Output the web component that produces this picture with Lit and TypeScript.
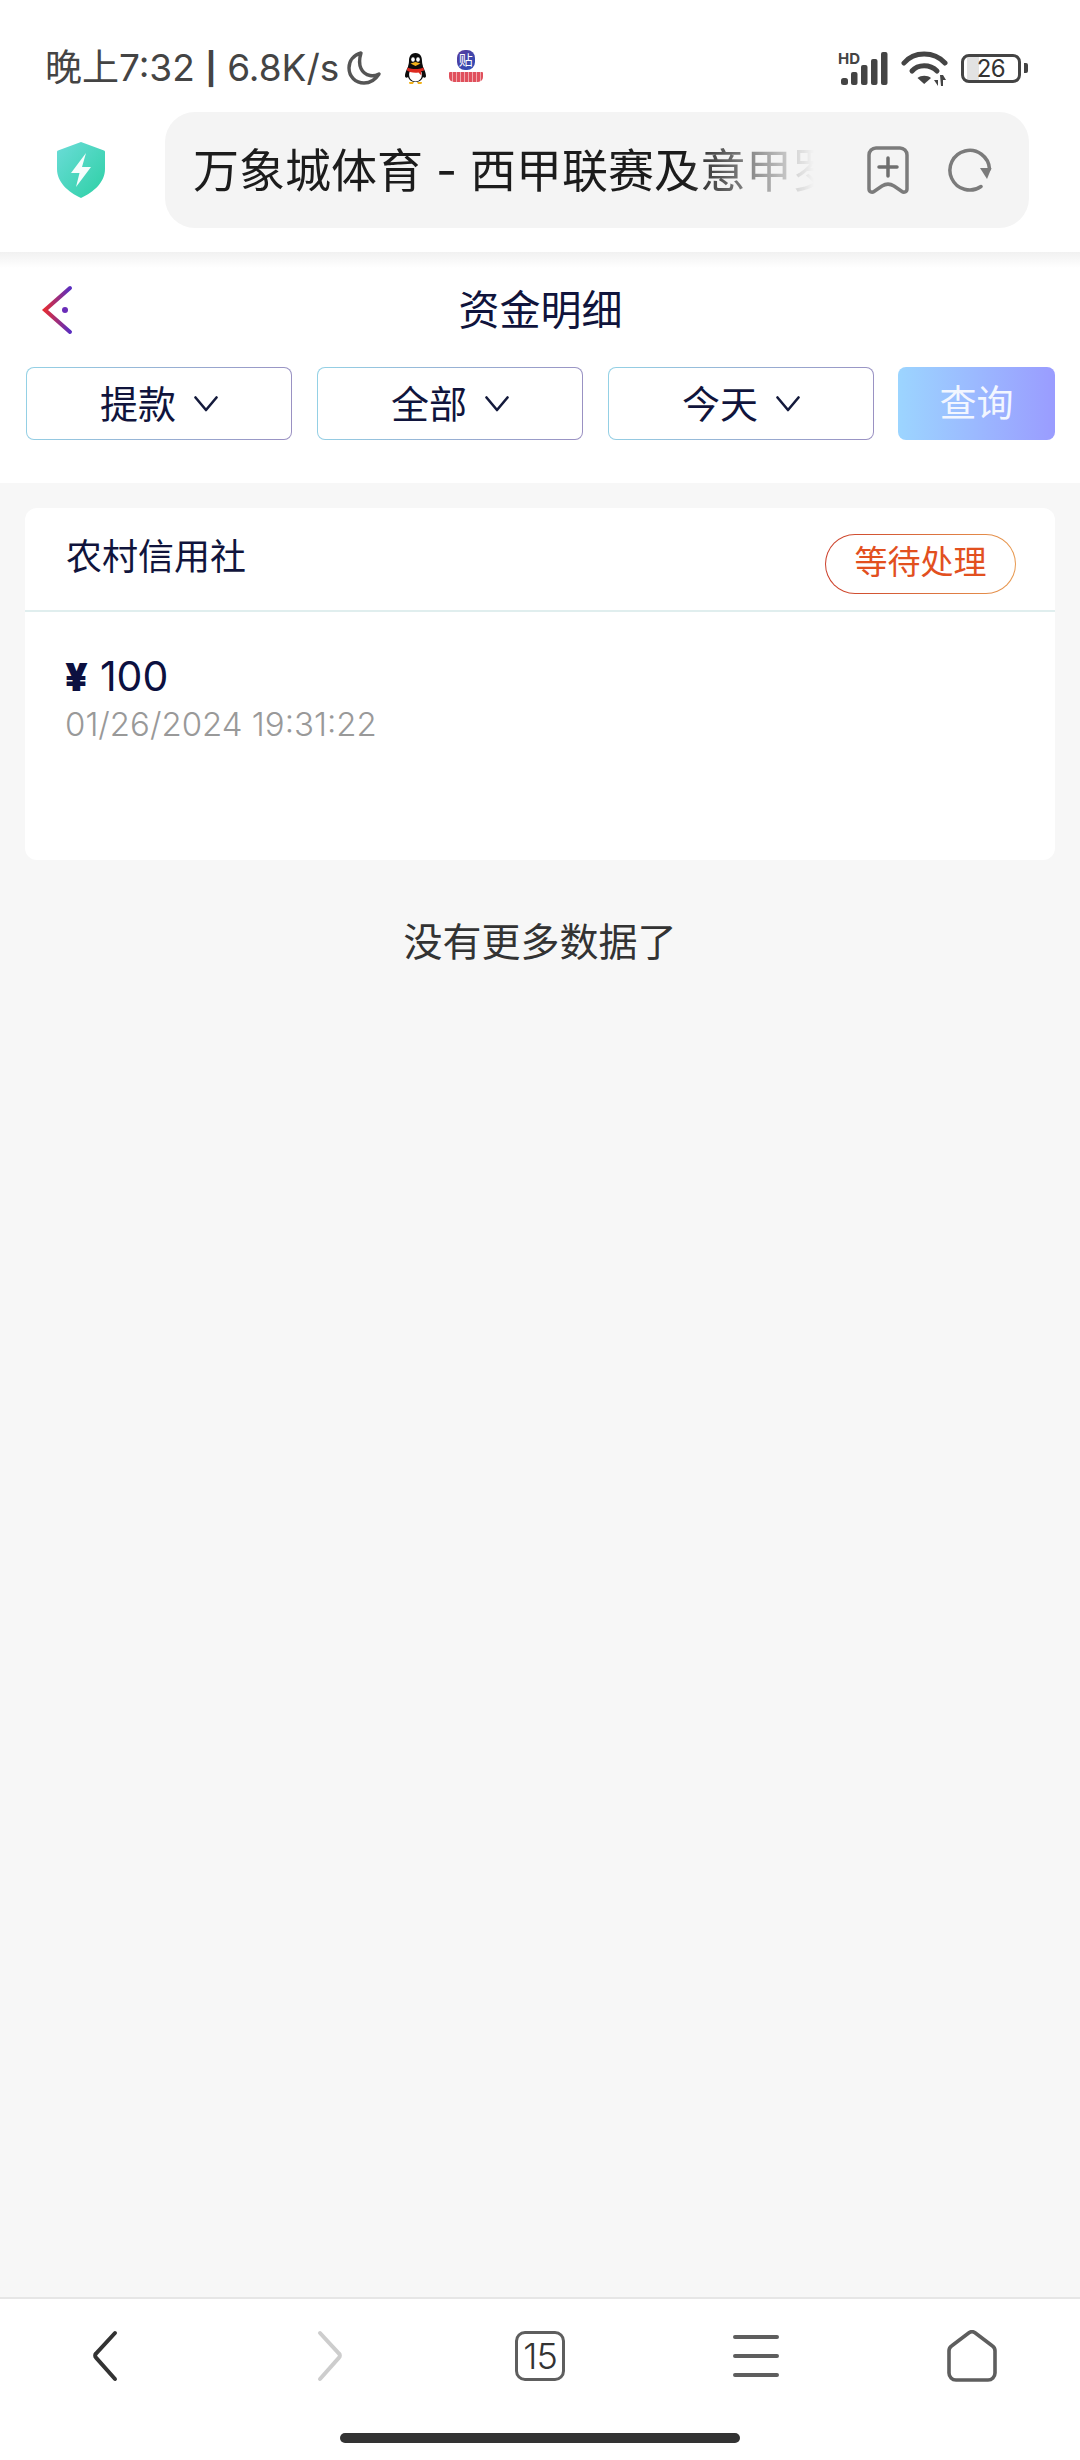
import { LitElement, html, css, svg } from 'lit';
import { customElement } from 'lit/decorators.js';

const FILTERS = ['提款', '全部', '今天'];

const chevron = html`<svg class="chev" width="24" height="16" viewBox="0 0 24 16">
  <path d="M1.5 1.5 12 14 22.5 1.5" fill="none" stroke="#141a3c" stroke-width="2.6" stroke-linecap="round" stroke-linejoin="round" />
</svg>`;

const penguin = svg`
  <path d="M12.5 1C7.5 1 6 5 6 9c0 3-1 4-1 6 0 0-3 5-3 9 0 2 2 2 3 1 1 3 4 5 7.500 5s6.500-2 7.500-5c1 1 3 1 3-1 0-4-3-9-3-9 0-2-1-3-1-6 0-4-1.500-8-6.500-8Z" fill="#0c0c0c" />
  <path d="M6.500 20c-1.500 5 1.500 9.500 6 9.500s7.500-4.500 6-9.500Z" fill="#fff" />
  <ellipse cx="10" cy="7.500" rx="1.800" ry="2.300" fill="#fff" />
  <ellipse cx="15" cy="7.500" rx="1.800" ry="2.300" fill="#fff" />
  <path d="M7.500 11.500 12.500 10l5 1.500-5 2.500Z" fill="#f2b21a" />
  <path d="M4.500 15.500c5 2 11 2 16 0l.5 3-3 1 .5 4-3-3c-3 .5-6 .2-8.500-.5l-3-1.500Z" fill="#dd2a20" />
  <path d="M6 30h5l-1 2H6.500ZM14 30h5l-.5 2H15Z" fill="#f2b21a" />
`;

@customElement('app-root')
export class AppRoot extends LitElement {
  static styles = css`
    :host {
      display: flex;
      flex-direction: column;
      width: 1080px;
      height: 2460px;
      background: #f7f7f7;
      font-family: Inter, Roboto, "Noto Sans CJK SC", sans-serif;
    }
    .browser {
      background: #fff;
      height: 252px;
      flex: none;
    }
    .status {
      display: flex;
      align-items: center;
      height: 112px;
      padding: 24px 52px 0 45px;
      box-sizing: border-box;
      color: #444;
    }
    .clock {
      font-size: 37px;
      line-height: 44px;
      white-space: nowrap;
    }
    .sep {
      font-size: 31px;
      font-weight: 700;
      vertical-align: 1px;
    }
    .moon { margin-left: 7px; }
    .qq { margin-left: 21px; }
    .tie-app {
      margin-left: 20px;
      width: 35px;
      height: 36px;
      display: flex;
      flex-direction: column;
      align-items: center;
    }
    .tie {
      width: 18px;
      height: 20px;
      border-radius: 8px;
      background: linear-gradient(135deg, #5a3a9c, #2a4fb8);
      color: #fff;
      font-size: 14px;
      line-height: 20px;
      text-align: center;
    }
    .ribbon {
      width: 34px;
      height: 10px;
      margin-top: 2px;
      background: repeating-linear-gradient(90deg, #e0505c 0 3px, #f0a8ac 3px 4px);
      border-radius: 1px 1px 5px 5px;
    }
    .status-right {
      margin-left: auto;
      display: flex;
      align-items: center;
      gap: 13px;
    }
    .battery {
      display: flex;
      align-items: center;
      gap: 3px;
    }
    .battery-body {
      width: 60px;
      height: 29px;
      box-sizing: border-box;
      border: 3px solid #444;
      border-radius: 8px;
      background: linear-gradient(90deg, #e2e2e2 12px, transparent 12px) 3px 0 / 100% 100% no-repeat;
      font-size: 24px;
      line-height: 23px;
      text-align: center;
      color: #333;
      letter-spacing: -0.5px;
    }
    .battery-nub {
      width: 4px;
      height: 10px;
      background: #444;
      border-radius: 0 2px 2px 0;
    }
    .address-row {
      display: flex;
      align-items: center;
      height: 116px;
      padding: 0 51px 0 57px;
    }
    .shield { flex: none; margin-right: 60px; }
    .pill {
      flex: 1;
      height: 116px;
      background: #f4f4f4;
      border-radius: 30px;
      display: flex;
      align-items: center;
      padding: 0 37px 0 28px;
    }
    .page-title-url {
      width: 640px;
      padding-bottom: 6px;
      font-size: 46px;
      color: #1c1c1c;
      white-space: nowrap;
      -webkit-mask-image: linear-gradient(90deg, #000 77%, transparent 97%);
      mask-image: linear-gradient(90deg, #000 77%, transparent 97%);
    }
    .pill-icons {
      margin-left: auto;
      display: flex;
      align-items: center;
      gap: 39px;
    }
    .head {
      flex: none;
      background: linear-gradient(#f1f1f1, #fff 16px);
      height: 231px;
      padding: 0 25px 0 26px;
      box-sizing: border-box;
    }
    .nav {
      position: relative;
      height: 115px;
      padding-bottom: 6px;
      box-sizing: border-box;
      display: flex;
      align-items: center;
      justify-content: center;
      font-size: 41px;
      color: #10143c;
    }
    .back {
      position: absolute;
      left: 15px;
      top: 33px;
    }
    .filters {
      display: flex;
      gap: 25px;
    }
    .filter {
      width: 266px;
      height: 73px;
      box-sizing: border-box;
      border: 1px solid transparent;
      border-radius: 8px;
      background: linear-gradient(#fff, #fff) padding-box,
        linear-gradient(100deg, #94d2e6, #9a90c2) border-box;
      display: flex;
      align-items: center;
      justify-content: center;
      gap: 18px;
      padding-bottom: 5px;
      font-size: 38px;
      color: #10143c;
    }
    .chev { margin-top: 5px; }
    .query {
      width: 157px;
      height: 73px;
      margin-left: -1px;
      padding-bottom: 5px;
      box-sizing: border-box;
      border-radius: 8px;
      background: linear-gradient(90deg, #9cd5ff, #9a9cff);
      color: #f2f6ff;
      font-size: 37px;
      display: flex;
      align-items: center;
      justify-content: center;
    }
    main {
      flex: 1;
      padding: 25px 25px 0;
    }
    .card {
      background: #fff;
      border-radius: 12px;
      height: 352px;
    }
    .card-head {
      height: 104px;
      box-sizing: border-box;
      border-bottom: 2px solid #e0eeee;
      padding: 26px 39px 0 41px;
      display: flex;
      justify-content: space-between;
      align-items: flex-start;
    }
    .bank {
      font-size: 36px;
      line-height: 46px;
      color: #10143c;
    }
    .badge {
      width: 191px;
      height: 60px;
      box-sizing: border-box;
      border: 1.5px solid transparent;
      border-radius: 30px;
      background: linear-gradient(#fff, #fff) padding-box,
        linear-gradient(90deg, #cc3f2a, #e89a50) border-box;
      font-size: 33px;
      line-height: 55px;
      text-align: center;
      color: #e2501f;
    }
    .card-body {
      padding: 39px 41px 0 40px;
    }
    .amount {
      display: flex;
      align-items: center;
      gap: 12px;
      height: 50px;
      font-size: 41px;
      color: #0c1040;
    }
    .yuan {
      font-weight: 900;
      font-size: 39px;
    }
    .date {
      margin-top: 2px;
      font-size: 33px;
      line-height: 42px;
      font-weight: 300;
      color: #999;
    }
    .no-more {
      margin-top: 54px;
      text-align: center;
      font-size: 39px;
      line-height: 56px;
      color: #333;
    }
    footer {
      flex: none;
      height: 163px;
      box-sizing: border-box;
      background: #fff;
      border-top: 2px solid #e6e6e6;
    }
    .tools {
      display: grid;
      grid-template-columns: repeat(5, 216px);
      padding-top: 30px;
      height: 54px;
    }
    .tool {
      display: flex;
      justify-content: center;
      align-items: center;
      height: 54px;
    }
    .tool-back { margin-right: 4px; }
    .tool-forward { margin-left: 10px; }
    .tabs {
      width: 50px;
      height: 50px;
      box-sizing: border-box;
      border: 3px solid #5e5e5e;
      border-radius: 10px;
      font-size: 36px;
      line-height: 44px;
      letter-spacing: -1px;
      text-align: center;
      color: #333;
      font-weight: 300;
    }
    .home-bar {
      width: 400px;
      height: 10px;
      border-radius: 5px;
      background: #333;
      margin: 50px auto 0;
    }
  `;

  render() {
    return html`
      <div class="browser">
        <div class="status">
          <span class="clock">晚上7:32 <span class="sep">|</span> 6.8K/s</span>
          <svg class="moon" width="36" height="36" viewBox="0 0 36 36">
            <path d="M15 3C8 5 3 10.500 3 18c0 8.500 6.500 15 15 15 6.500 0 11.500-3.500 15-9-3 1.500-6 2-9 1.500C16 24 11 16 15 3Z" fill="none" stroke="#555" stroke-width="3.400" stroke-linejoin="round" />
          </svg>
          <svg class="qq" width="25" height="33" viewBox="0 0 25 33">${penguin}</svg>
          <div class="tie-app">
            <div class="tie">贴</div>
            <div class="ribbon"></div>
          </div>
          <div class="status-right">
            <svg width="50" height="34" viewBox="0 0 50 34">
              <text x="0" y="13" font-family="Inter, Roboto, sans-serif" font-size="15" font-weight="700" fill="#444">HD</text>
              <g fill="#444">
                <rect x="3" y="27" width="7" height="7" rx="2.500" />
                <rect x="13" y="21" width="6.500" height="13" rx="2" />
                <rect x="23" y="14" width="6.500" height="20" rx="2" />
                <rect x="33" y="8" width="6.500" height="26" rx="2" />
                <rect x="43" y="1" width="6.500" height="33" rx="2" />
              </g>
            </svg>
            <svg width="47" height="36" viewBox="0 0 47 36">
              <g fill="none" stroke="#444" stroke-width="5" stroke-linecap="round">
                <path d="M3 13C13 1 33 1 44 13" />
                <path d="M11 21c6-7 18-7 25 0" />
              </g>
              <path d="M16.500 28c3.500-3 10-3 13.500 0l-6.800 6Z" fill="#444" />
              <path d="M33 30h4v6ZM39 25h3l3 5h-3v6h-2Z" fill="#444" />
            </svg>
            <div class="battery">
              <div class="battery-body">26</div>
              <div class="battery-nub"></div>
            </div>
          </div>
        </div>
        <div class="address-row">
          <svg class="shield" width="48" height="56" viewBox="0 0 48 56">
            <defs>
              <linearGradient id="sh" x1="0" y1="0" x2="1" y2="1">
                <stop offset="0" stop-color="#6bdcd8" />
                <stop offset="1" stop-color="#2cd0a4" />
              </linearGradient>
            </defs>
            <path d="M24 0 47 8.500a1.500 1.500 0 0 1 1 1.500v17C48 40 37 50 24 56 11 50 0 40 0 27V10a1.500 1.500 0 0 1 1-1.500Z" fill="url(#sh)" />
            <path d="M29 11 14 31h8.500L19 45 34 25h-9Z" fill="#fff" fill-opacity=".95" />
          </svg>
          <div class="pill">
            <div class="page-title-url">万象城体育 - 西甲联赛及意甲罗</div>
            <div class="pill-icons">
              <svg width="42" height="48" viewBox="0 0 42 48">
                <path d="M9 2h24a7 7 0 0 1 7 7v34c0 3-3 4-5 2.500l-8-5.500c-4-2.500-8-2.500-12 0l-8 5.500C5 47 2 46 2 43V9a7 7 0 0 1 7-7Z" fill="none" stroke="#7b7b7b" stroke-width="3.500" stroke-linejoin="round" />
                <path d="M21 12v18M12 21h18" stroke="#6f6f6f" stroke-width="3.500" stroke-linecap="round" />
              </svg>
              <svg width="44" height="44" viewBox="0 0 44 44">
                <path d="M33 38.500A19.800 19.800 0 1 1 41.500 21" fill="none" stroke="#7b7b7b" stroke-width="3.500" stroke-linecap="round" />
                <path d="M32 20h11.500L39 31Z" fill="#7b7b7b" />
              </svg>
            </div>
          </div>
        </div>
      </div>
      <div class="head">
        <div class="nav">
          <svg class="back" width="32" height="50" viewBox="0 0 32 50">
            <defs>
              <linearGradient id="bk" x1="0" y1="0" x2="1" y2="0">
                <stop offset="0" stop-color="#e22c36" />
                <stop offset="1" stop-color="#5a2ec0" />
              </linearGradient>
            </defs>
            <path d="M29 3 4 25l25 22" fill="none" stroke="url(#bk)" stroke-width="4" stroke-linecap="round" />
            <circle cx="24" cy="25" r="3" fill="#6a2cb8" />
          </svg>
          资金明细
        </div>
        <div class="filters">
          ${FILTERS.map((f) => html`<div class="filter">${f}${chevron}</div>`)}
          <div class="query">查询</div>
        </div>
      </div>
      <main>
        <div class="card">
          <div class="card-head">
            <span class="bank">农村信用社</span>
            <span class="badge">等待处理</span>
          </div>
          <div class="card-body">
            <div class="amount"><span class="yuan">¥</span><span>100</span></div>
            <div class="date">01/26/2024 19:31:22</div>
          </div>
        </div>
        <div class="no-more">没有更多数据了</div>
      </main>
      <footer>
        <div class="tools">
          <div class="tool tool-back">
            <svg width="30" height="52" viewBox="0 0 30 52">
              <path d="M24 3 5 23.500a3 3 0 0 0 0 4.200L24 49" fill="none" stroke="#333" stroke-width="4" stroke-linecap="round" />
            </svg>
          </div>
          <div class="tool tool-forward">
            <svg width="30" height="52" viewBox="0 0 30 52">
              <path d="M6 3 25 23.500a3 3 0 0 1 0 4.200L6 49" fill="none" stroke="#cdcdcd" stroke-width="4" stroke-linecap="round" />
            </svg>
          </div>
          <div class="tool"><div class="tabs">15</div></div>
          <div class="tool">
            <svg width="46" height="46" viewBox="0 0 46 46">
              <path d="M2 4h42M2 23h42M2 42h42" stroke="#5e5e5e" stroke-width="4" stroke-linecap="round" />
            </svg>
          </div>
          <div class="tool">
            <svg width="50" height="52" viewBox="0 0 50 52">
              <path d="M22 2.800 4.500 16A6 6 0 0 0 2 21v22a7 7 0 0 0 7 7h32a7 7 0 0 0 7-7V21a6 6 0 0 0-2.500-5L28 2.800a5 5 0 0 0-6 0Z" fill="none" stroke="#5e5e5e" stroke-width="3.600" stroke-linejoin="round" />
            </svg>
          </div>
        </div>
        <div class="home-bar"></div>
      </footer>
    `;
  }
}
